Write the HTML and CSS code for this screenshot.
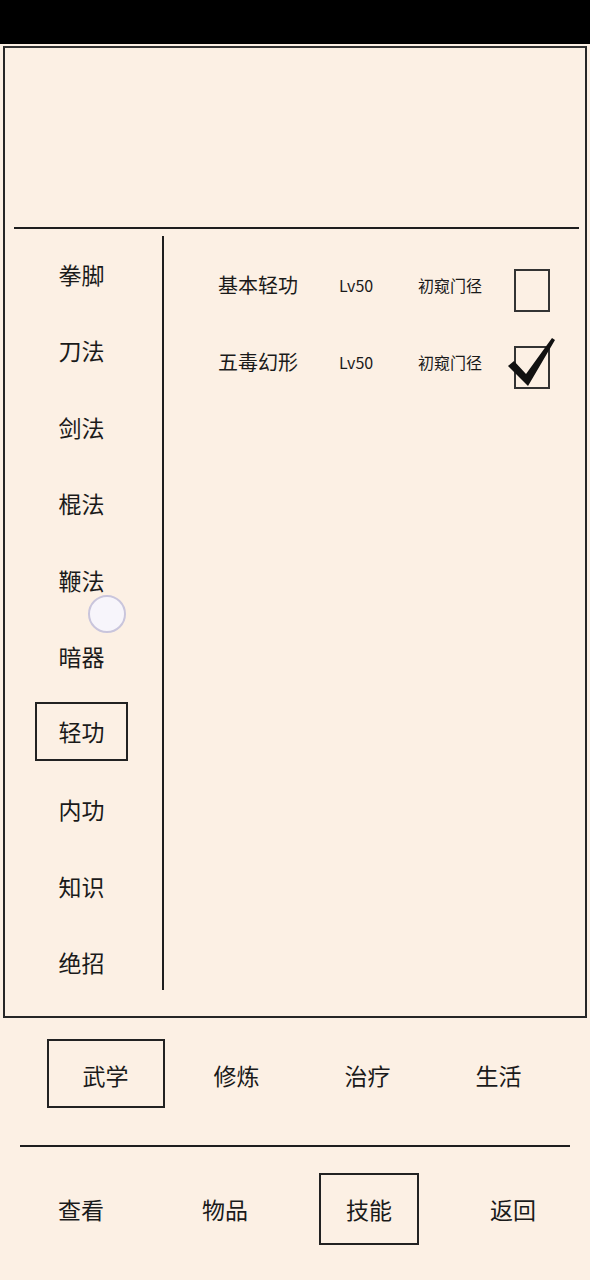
FILE: index.html
```html
<!DOCTYPE html>
<html lang="zh">
<head>
<meta charset="utf-8">
<link rel="stylesheet" href="styles.css">
</head>
<body>
<div class="statusbar"></div>
<div class="frame">
  <div class="header"></div>
  <div class="rule"></div>
  <div class="body">
    <ul class="cats">
      <li><span>拳脚</span></li>
      <li><span>刀法</span></li>
      <li><span>剑法</span></li>
      <li><span>棍法</span></li>
      <li><span>鞭法</span></li>
      <li><span>暗器</span></li>
      <li><span class="sel">轻功</span></li>
      <li><span>内功</span></li>
      <li><span>知识</span></li>
      <li><span>绝招</span></li>
    </ul>
    <div class="skills">
      <div class="skill">
        <span class="name">基本轻功</span>
        <span class="lv">Lv50</span>
        <span class="rank">初窥门径</span>
        <span class="box"></span>
      </div>
      <div class="skill">
        <span class="name">五毒幻形</span>
        <span class="lv">Lv50</span>
        <span class="rank">初窥门径</span>
        <span class="box checked">
          <svg class="tick" viewBox="0 0 51 54" width="51" height="54"><polygon points="3,29 9,24 21,37 47,1 50,3 23,49" fill="#111"/></svg>
        </span>
      </div>
    </div>
  </div>
</div>
<div class="tabs1">
  <span class="tab sel1">武学</span>
  <span class="tab">修炼</span>
  <span class="tab">治疗</span>
  <span class="tab">生活</span>
</div>
<div class="rule2"></div>
<div class="tabs2">
  <span class="tab">查看</span>
  <span class="tab">物品</span>
  <span class="tab sel2">技能</span>
  <span class="tab">返回</span>
</div>
<div class="touch"></div>
</body>
</html>
```

FILE: styles.css
```css
html, body {
  margin: 0;
  padding: 0;
}
body {
  width: 590px;
  height: 1280px;
  background: #fcf0e4;
  font-family: "Noto Sans CJK SC", "Noto Sans", sans-serif;
  color: #1a1a1a;
  position: relative;
  overflow: hidden;
}
.statusbar {
  height: 44px;
  background: #000;
}
.frame {
  box-sizing: border-box;
  margin: 2px 0 0 3px;
  width: 584px;
  height: 972px;
  border: 2px solid #262626;
  border-top-color: #333;
}
.header {
  height: 179px;
}
.rule {
  height: 2px;
  background: #1e1e1e;
  margin: 0 6px 0 9px;
}
.body {
  display: flex;
}
.cats {
  list-style: none;
  margin: 7px 0 0 0;
  padding: 0 4px 0 0;
  box-sizing: border-box;
  width: 159px;
  height: 754px;
  border-right: 2px solid #1e1e1e;
  display: grid;
  grid-auto-rows: 76.5px;
  align-content: start;
}
.cats li {
  display: flex;
  align-items: center;
  justify-content: center;
  font-size: 23px;
  line-height: 1;
}
.cats .sel {
  box-sizing: border-box;
  width: 93px;
  height: 59px;
  border: 2px solid #222;
  display: flex;
  align-items: center;
  justify-content: center;
  margin-top: -4px;
}
.skills {
  flex: 1;
  padding: 37px 0 0 54px;
}
.skill {
  display: grid;
  grid-template-columns: 121px 79px 96px 36px;
  align-items: start;
  height: 77px;
}
.skill .name {
  font-size: 20px;
  line-height: 24px;
  margin-top: 7px;
}
.skill .lv,
.skill .rank {
  font-size: 16px;
  line-height: 24px;
  margin-top: 7px;
}
.skill .box {
  position: relative;
  box-sizing: border-box;
  width: 36px;
  height: 43px;
  border: 2px solid #333;
  margin-top: 3px;
}
.skill .tick {
  position: absolute;
  left: -11px;
  top: -11px;
}
.tabs1 {
  display: grid;
  grid-template-columns: repeat(4, 131px);
  padding-left: 40px;
  margin-top: 21px;
  height: 69px;
}
.tab {
  display: flex;
  align-items: center;
  justify-content: center;
  font-size: 23px;
  line-height: 1;
  padding-top: 4px;
}
.sel1 {
  box-sizing: border-box;
  width: 118px;
  height: 69px;
  justify-self: center;
  border: 2px solid #222;
}
.rule2 {
  height: 2px;
  background: #1e1e1e;
  margin: 37px 20px 0 20px;
}
.tabs2 {
  display: grid;
  grid-template-columns: repeat(4, 144px);
  padding-left: 9px;
  margin-top: 26px;
  height: 72px;
}
.tabs2 .tab {
  padding-top: 0;
}
.sel2 {
  box-sizing: border-box;
  width: 100px;
  height: 72px;
  justify-self: center;
  border: 2px solid #222;
}
.touch {
  position: absolute;
  left: 88px;
  top: 595px;
  width: 34px;
  height: 34px;
  border-radius: 50%;
  background: #f7f5fb;
  border: 2px solid #c9c5dc;
}
```
